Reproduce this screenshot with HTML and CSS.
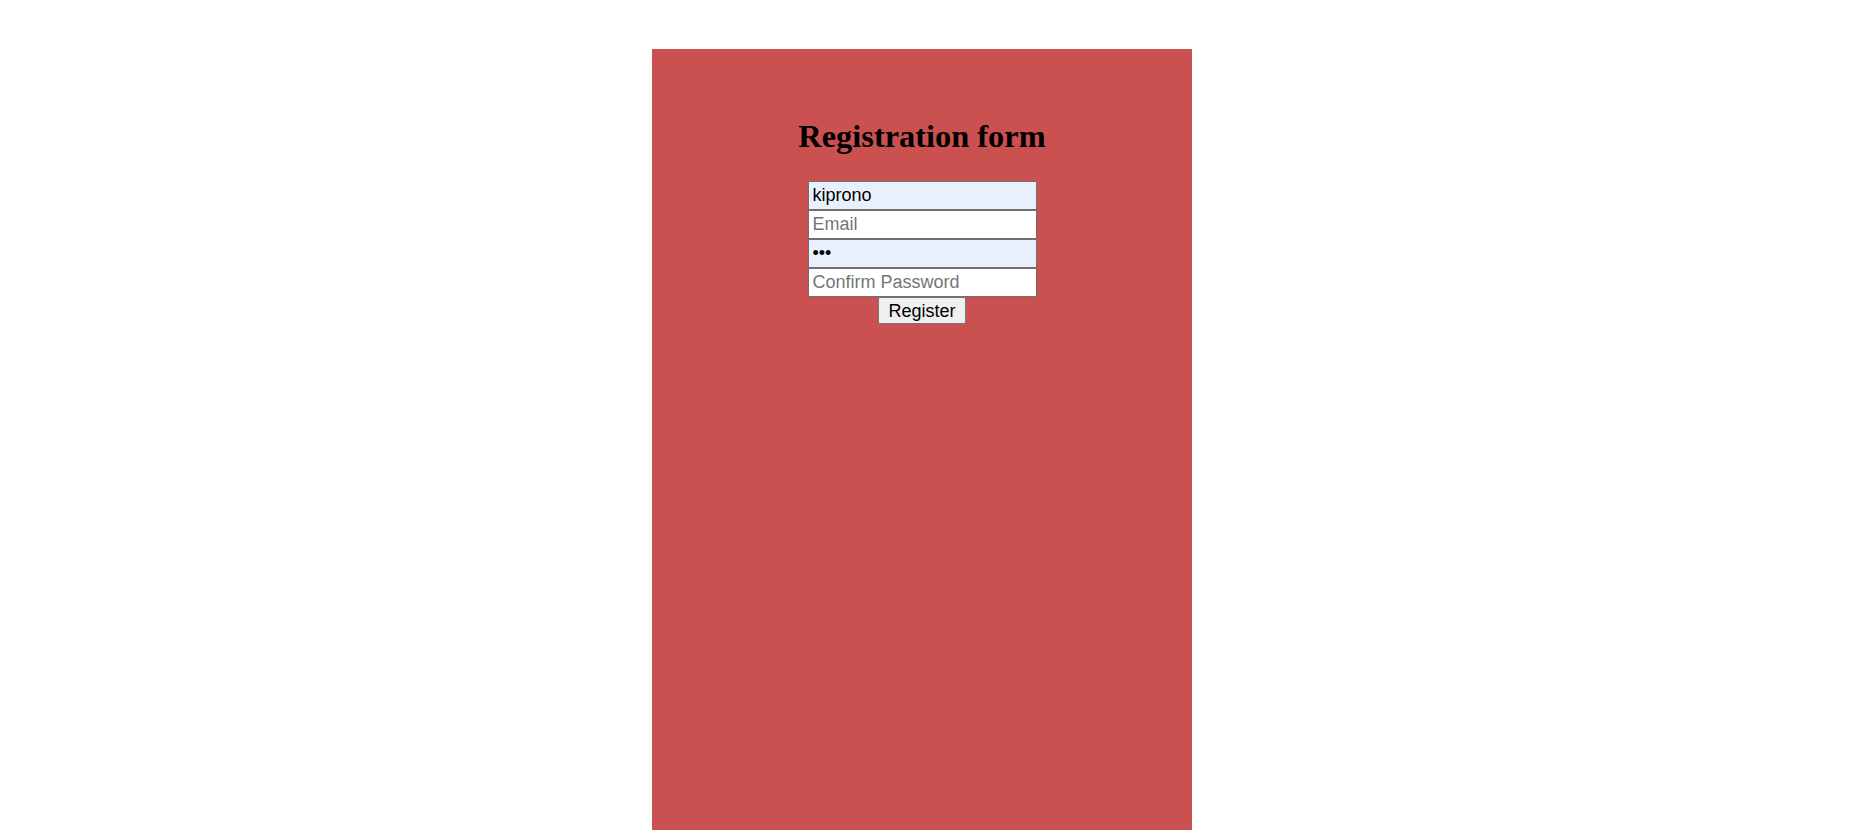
FILE: index.html
```html
<!DOCTYPE html>
<html lang="en">
<head>
<meta charset="utf-8">
<title>Registration form</title>
<link rel="stylesheet" href="styles.css">
</head>
<body>
<div class="panel">
  <h1 class="title">Registration form</h1>
  <form class="form">
    <input class="field filled" type="text" value="kiprono">
    <input class="field" type="email" placeholder="Email">
    <input class="field filled" type="password" value="abc">
    <input class="field" type="password" placeholder="Confirm Password">
    <button class="btn" type="button">Register</button>
  </form>
</div>
</body>
</html>
```

FILE: styles.css
```css
html, body {
  margin: 0;
  padding: 0;
  background: #ffffff;
  height: 100%;
  overflow: hidden;
}
.panel {
  margin: 49px 0 0 652px;
  width: 540px;
  height: 781px;
  background: #cb5050;
  padding-top: 69px;
  box-sizing: border-box;
}
.title {
  margin: 0;
  font-family: "Liberation Serif", "Times New Roman", serif;
  font-weight: bold;
  font-size: 32.4px;
  line-height: 36px;
  text-align: center;
  color: #000;
}
.form {
  margin-top: 27px;
  display: flex;
  flex-direction: column;
  align-items: center;
}
.field {
  box-sizing: border-box;
  width: 229px;
  height: 29px;
  margin: 0;
  padding: 1px 4px;
  border: 1px solid #6f6f6f;
  border-radius: 0;
  background: #ffffff;
  font-family: "Liberation Sans", Arial, sans-serif;
  font-size: 18px;
  color: #000;
  outline: none;
}
.field.filled {
  background: #e8f0fe;
}
.field::placeholder {
  color: #757575;
}
.btn {
  box-sizing: border-box;
  margin-top: 0;
  height: 27px;
  padding: 0 9px;
  border: 1px solid #767676;
  border-radius: 2px;
  background: #efefef;
  font-family: "Liberation Sans", Arial, sans-serif;
  font-size: 18px;
  color: #000;
  line-height: 22px;
}
```
